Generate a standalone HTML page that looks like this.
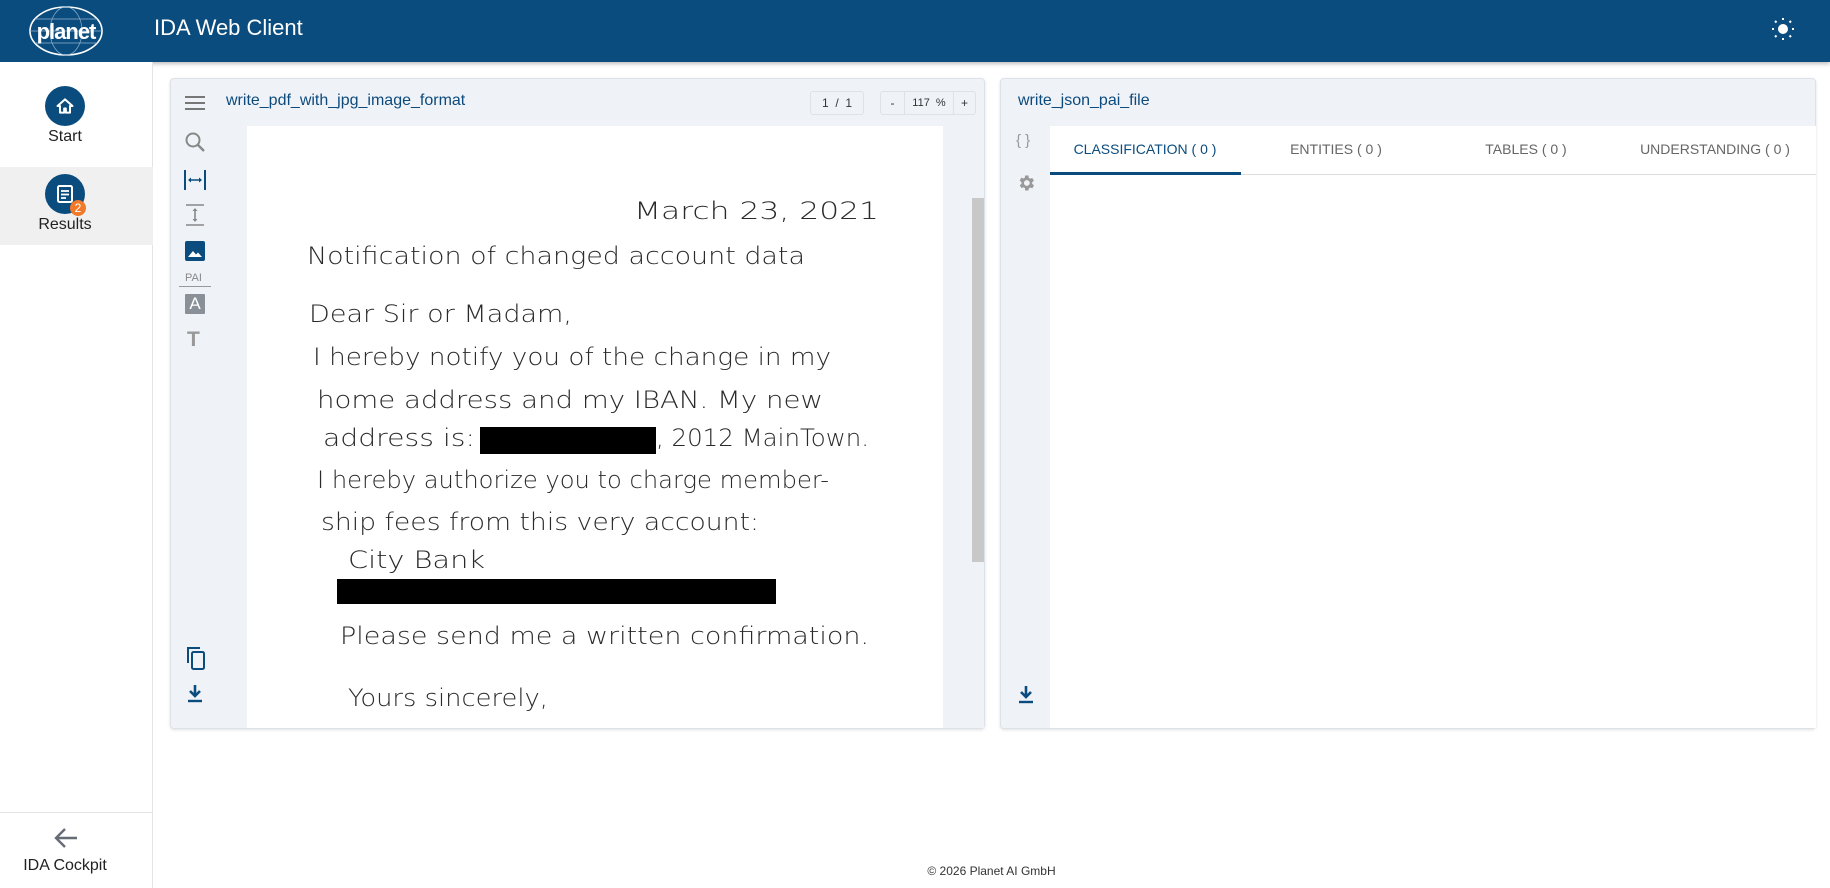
<!DOCTYPE html>
<html><head><meta charset="utf-8"><style>
*{box-sizing:border-box;margin:0;padding:0}
body{width:1830px;height:888px;position:relative;background:#fff;font-family:"Liberation Sans",sans-serif;overflow:hidden;color:#222}
.a{position:absolute}
.hdr{left:0;top:0;width:1830px;height:62px;background:#0b4c7e;box-shadow:0 2px 4px rgba(0,0,0,.25)}
.side{left:0;top:62px;width:153px;height:826px;border-right:1px solid #e4e4e4;background:#fff}
.circ{width:40px;height:40px;border-radius:50%;background:#0b4c7e}
.lbl{font-size:16px;color:#222;text-align:center;width:130px;left:0}
.panel{background:#eff3f8;border:1px solid #dde2e8;border-radius:4px;box-shadow:0 1px 3px rgba(0,0,0,.12)}
.ptitle{font-size:16px;color:#0d4a7c}
.tab{font-size:14px;color:#666;top:141px;text-align:center;width:190px}
.box{border:1px solid #dde2e8;border-radius:3px;background:#eff3f8;font-size:12px;color:#333}
</style></head><body>
<div class="a hdr"></div>
<svg class="a" style="left:27px;top:5px" width="78" height="52" viewBox="0 0 78 52">
<ellipse cx="39" cy="26" rx="36" ry="24" fill="none" stroke="#fff" stroke-width="1.6"/>
<ellipse cx="39" cy="26" rx="16" ry="24" fill="none" stroke="#8fb0cc" stroke-width=".7"/>
<line x1="3" y1="26" x2="75" y2="26" stroke="#8fb0cc" stroke-width=".7"/>
<line x1="8" y1="14" x2="70" y2="14" stroke="#8fb0cc" stroke-width=".7"/>
<line x1="8" y1="38" x2="70" y2="38" stroke="#8fb0cc" stroke-width=".7"/>
<text x="39" y="34" text-anchor="middle" font-family="Liberation Sans" font-weight="bold" font-size="22" fill="#fff" letter-spacing="-1">planet</text>
</svg>
<div class="a" style="left:154px;top:15px;font-size:22px;color:#fff">IDA Web Client</div>
<svg class="a" style="left:1771px;top:17px" width="24" height="24" viewBox="0 0 24 24"><circle cx="12" cy="12" r="5" fill="#fff"/><g stroke="#fff" stroke-width="2"><line x1="12" y1="1" x2="12" y2="3"/><line x1="12" y1="21" x2="12" y2="23"/><line x1="1" y1="12" x2="3" y2="12"/><line x1="21" y1="12" x2="23" y2="12"/><line x1="4" y1="4" x2="5.5" y2="5.5"/><line x1="18.5" y1="18.5" x2="20" y2="20"/><line x1="4" y1="20" x2="5.5" y2="18.5"/><line x1="18.5" y1="5.5" x2="20" y2="4"/></g></svg>

<div class="a side"></div>
<div class="a circ" style="left:45px;top:86px"></div>
<svg class="a" style="left:55px;top:96px" width="20" height="20" viewBox="0 0 24 24"><path d="M12 4 3 12h3v8h5v-5h2v5h5v-8h3z" fill="none" stroke="#fff" stroke-width="2.4" stroke-linejoin="round"/></svg>
<div class="a lbl" style="top:128px">Start</div>
<div class="a" style="left:0;top:167px;width:153px;height:78px;background:#f0f0f0"></div>
<div class="a circ" style="left:45px;top:174px"></div>
<svg class="a" style="left:55px;top:184px" width="20" height="20" viewBox="0 0 20 20"><rect x="3" y="2" width="14" height="16" rx="1.5" fill="none" stroke="#fff" stroke-width="2"/><g stroke="#fff" stroke-width="1.8"><line x1="6" y1="7" x2="14" y2="7"/><line x1="6" y1="10.5" x2="14" y2="10.5"/><line x1="6" y1="14" x2="11" y2="14"/></g></svg>
<div class="a" style="left:70px;top:200px;width:16px;height:16px;border-radius:50%;background:#f07a2a;color:#fff;font-size:12px;text-align:center;line-height:16px">2</div>
<div class="a lbl" style="top:216px">Results</div>
<div class="a" style="left:0;top:812px;width:153px;border-top:1px solid #e4e4e4"></div>
<svg class="a" style="left:53px;top:827px" width="26" height="22" viewBox="0 0 26 22"><path d="M24 11H3M12 2 3 11l9 9" fill="none" stroke="#656c76" stroke-width="2.4"/></svg>
<div class="a lbl" style="top:857px">IDA Cockpit</div>
<div class="a" style="left:153px;top:864px;width:1677px;text-align:center;font-size:12px;color:#333">© 2026 Planet AI GmbH</div>

<!-- left panel -->
<div class="a panel" style="left:170px;top:78px;width:815px;height:651px"></div>
<svg class="a" style="left:185px;top:94px" width="20" height="18"><g stroke="#777" stroke-width="2"><line x1="0" y1="3" x2="20" y2="3"/><line x1="0" y1="9" x2="20" y2="9"/><line x1="0" y1="15" x2="20" y2="15"/></g></svg>
<div class="a ptitle" style="left:226px;top:92px">write_pdf_with_jpg_image_format</div>
<div class="a box" style="left:810px;top:91px;width:54px;height:24px;line-height:22px;text-align:center">1 &nbsp;/ &nbsp;1</div>
<div class="a box" style="left:880px;top:91px;width:96px;height:24px;line-height:22px;display:flex"><span style="width:24px;text-align:center;border-right:1px solid #dde2e8">-</span><span style="width:48px;text-align:center;font-size:11px">117 &nbsp;%</span><span style="width:22px;text-align:center;border-left:1px solid #dde2e8">+</span></div>
<svg class="a" style="left:184px;top:131px" width="22" height="22" viewBox="0 0 22 22"><circle cx="9" cy="9" r="6.5" fill="none" stroke="#888" stroke-width="2"/><line x1="14" y1="14" x2="20" y2="20" stroke="#888" stroke-width="2.4"/></svg>
<svg class="a" style="left:184px;top:169px" width="22" height="22" viewBox="0 0 22 22"><g stroke="#0b4c7e" stroke-width="2"><line x1="1" y1="1" x2="1" y2="21"/><line x1="21" y1="1" x2="21" y2="21"/><line x1="5" y1="11" x2="17" y2="11" stroke-width="1.5"/></g><path d="M4 11l3-2.5v5zM18 11l-3-2.5v5z" fill="#0b4c7e"/></svg>
<svg class="a" style="left:184px;top:204px" width="22" height="22" viewBox="0 0 22 22"><g stroke="#888" stroke-width="1.6"><line x1="2" y1="1" x2="20" y2="1"/><line x1="2" y1="21" x2="20" y2="21"/><line x1="11" y1="5" x2="11" y2="17"/></g><path d="M11 4l-2.5 3h5zM11 18l-2.5-3h5z" fill="#888"/></svg>
<svg class="a" style="left:185px;top:241px" width="20" height="20" viewBox="0 0 20 20"><rect width="20" height="20" rx="2" fill="#0b4c7e"/><path d="M3 16l5-6 3 3.5 2-2 4 4.5z" fill="#fff"/></svg>
<div class="a" style="left:185px;top:272px;font-size:11px;color:#888">PAI</div>
<div class="a" style="left:179px;top:286px;width:32px;border-top:1px solid #999"></div>
<div class="a" style="left:185px;top:294px;width:20px;height:20px;background:#8a9098;color:#fff;font-size:17px;text-align:center;line-height:20px;border-radius:1px">A</div>
<div class="a" style="left:187px;top:328px;font-size:21px;font-weight:bold;color:#999">T</div>
<svg class="a" style="left:185px;top:647px" width="22" height="24" viewBox="0 0 22 24"><path d="M15 1H3v15" fill="none" stroke="#0b4c7e" stroke-width="2"/><rect x="7" y="5" width="12" height="17" rx="1.5" fill="none" stroke="#0b4c7e" stroke-width="2"/></svg>
<svg class="a" style="left:186px;top:684px" width="18" height="20" viewBox="0 0 18 20"><path d="M9 1v10M4 7l5 5 5-5" fill="none" stroke="#0b4c7e" stroke-width="2.6"/><line x1="2" y1="17" x2="16" y2="17" stroke="#0b4c7e" stroke-width="2.4"/></svg>
<div class="a" style="left:247px;top:126px;width:696px;height:602px;background:#fff"></div>
<div class="a" style="left:943px;top:126px;width:41px;height:602px;background:#eff3f8"></div>
<div class="a" style="left:972px;top:198px;width:12px;height:364px;background:#c8c8c8"></div>

<svg class="a" style="left:0;top:0" width="1830" height="888">
<g font-family="DejaVu Sans,sans-serif" font-weight="200" font-size="24" fill="#2a2a2a">
<text x="634" y="219" textLength="245" lengthAdjust="spacingAndGlyphs">March 23, 2021</text>
<text x="307" y="264" textLength="498" lengthAdjust="spacingAndGlyphs">Notification of changed account data</text>
<text x="309" y="322" textLength="263" lengthAdjust="spacingAndGlyphs">Dear Sir or Madam,</text>
<text x="313" y="365" textLength="518" lengthAdjust="spacingAndGlyphs">I hereby notify you of the change in my</text>
<text x="317" y="408" textLength="506" lengthAdjust="spacingAndGlyphs">home address and my IBAN. My new</text>
<text x="323" y="446" textLength="152" lengthAdjust="spacingAndGlyphs">address is:</text>
<text x="656" y="446" textLength="213" lengthAdjust="spacingAndGlyphs">, 2012 MainTown.</text>
<text x="317" y="488" textLength="512" lengthAdjust="spacingAndGlyphs">I hereby authorize you to charge member-</text>
<text x="321" y="530" textLength="438" lengthAdjust="spacingAndGlyphs">ship fees from this very account:</text>
<text x="348" y="568" textLength="137" lengthAdjust="spacingAndGlyphs">City Bank</text>
<text x="340" y="644" textLength="529" lengthAdjust="spacingAndGlyphs">Please send me a written confirmation.</text>
<text x="348" y="706" textLength="200" lengthAdjust="spacingAndGlyphs">Yours sincerely,</text>
</g>
<rect x="480" y="427" width="176" height="27" fill="#000"/>
<rect x="337" y="579" width="439" height="25" fill="#000"/>
</svg>

<!-- right panel -->
<div class="a panel" style="left:1000px;top:78px;width:816px;height:651px"></div>
<div class="a ptitle" style="left:1018px;top:92px">write_json_pai_file</div>
<div class="a" style="left:1050px;top:126px;width:766px;height:602px;background:#fff"></div>
<div class="a" style="left:1016px;top:132px;font-size:15px;color:#999">{ }</div>
<svg class="a" style="left:1016px;top:173px" width="20" height="20" viewBox="0 0 24 24"><path fill="#999" d="M19.4 13a7.5 7.5 0 000-2l2.1-1.6-2-3.5-2.5 1a7 7 0 00-1.7-1L15 3h-4l-.4 2.6a7 7 0 00-1.7 1l-2.5-1-2 3.5L6.6 11a7.5 7.5 0 000 2l-2.1 1.6 2 3.5 2.5-1a7 7 0 001.7 1L11 21h4l.4-2.6a7 7 0 001.7-1l2.5 1 2-3.5zM13 15.5A3.5 3.5 0 1113 8.5a3.5 3.5 0 010 7z"/></svg>
<svg class="a" style="left:1017px;top:685px" width="18" height="20" viewBox="0 0 18 20"><path d="M9 1v10M4 7l5 5 5-5" fill="none" stroke="#0b4c7e" stroke-width="2.6"/><line x1="2" y1="17" x2="16" y2="17" stroke="#0b4c7e" stroke-width="2.4"/></svg>
<div class="a" style="left:1050px;top:174px;width:766px;border-top:1px solid #ddd"></div>
<div class="a" style="left:1050px;top:172px;width:191px;height:3px;background:#0b4c7e"></div>
<div class="a tab" style="left:1050px;color:#0b4c7e">CLASSIFICATION ( 0 )</div>
<div class="a tab" style="left:1241px">ENTITIES ( 0 )</div>
<div class="a tab" style="left:1431px">TABLES ( 0 )</div>
<div class="a tab" style="left:1620px">UNDERSTANDING ( 0 )</div>
</body></html>
